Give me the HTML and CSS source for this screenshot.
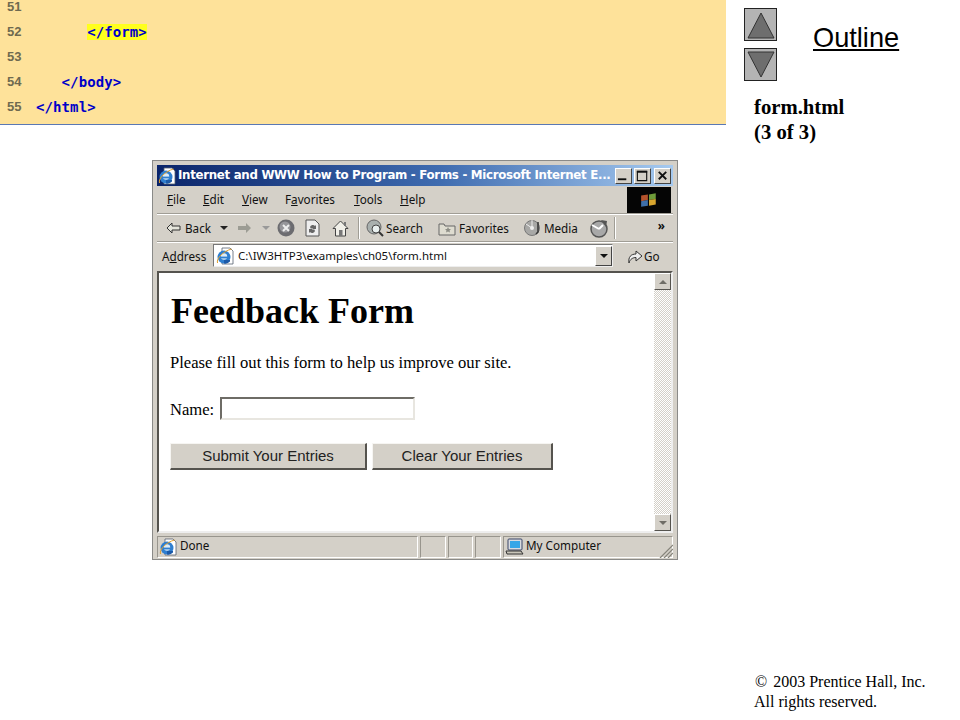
FILE: index.html
```html
<!DOCTYPE html>
<html lang="en">
<head>
<meta charset="utf-8">
<title>form.html</title>
<link rel="stylesheet" href="styles.css">
</head>
<body>
<svg class="defs" width="0" height="0" aria-hidden="true">
  <symbol id="ie" viewBox="0 0 18 18">
    <path d="M6 1h8l3 3v13H6z" fill="#fff" stroke="#55606e" stroke-width=".8"/>
    <circle cx="8" cy="10" r="6.500" fill="#2f7fd0"/>
    <circle cx="8" cy="9.500" r="3.200" fill="#dcecf8"/>
    <rect x="2" y="9.600" width="12" height="1.800" fill="#2f7fd0"/>
    <path d="M8 13h6v1.600a6.500 6.500 0 0 1-6 1.900z" fill="#1c5aa8"/>
    <path d="M1.500 16C0 11 8 4 15.500 2" fill="none" stroke="#e0a030" stroke-width="1"/>
  </symbol>
</svg>
<div class="slide">
  <main class="left">
    <section class="code">
      <div class="line"><span class="num">51</span></div>
      <div class="line"><span class="num">52</span><code class="src"><span class="spc">      </span><mark class="hl">&lt;/form&gt;</mark></code></div>
      <div class="line"><span class="num">53</span></div>
      <div class="line"><span class="num">54</span><code class="src"><span class="spc">   </span>&lt;/body&gt;</code></div>
      <div class="line"><span class="num">55</span><code class="src">&lt;/html&gt;</code></div>
    </section>

    <section class="window">
      <div class="title">
        <svg class="ico16" viewBox="0 0 18 18"><use href="#ie"/></svg>
        <span class="title-text">Internet and WWW How to Program - Forms - Microsoft Internet E...</span>
        <div class="caps">
          <span class="cap"><svg viewBox="0 0 16 15"><rect x="2" y="10" width="9" height="2" fill="#111"/></svg></span>
          <span class="cap"><svg viewBox="0 0 16 15"><path d="M2.500 2.500h10v10h-10z" fill="none" stroke="#111" stroke-width="1.200"/><rect x="2" y="2" width="11" height="2" fill="#111"/></svg></span>
          <span class="cap cap-x"><svg viewBox="0 0 16 15"><path d="M4 3l8 8M12 3l-8 8" stroke="#111" stroke-width="2"/></svg></span>
        </div>
      </div>

      <div class="menubar">
        <nav class="menus">
          <span class="m1"><u>F</u>ile</span>
          <span class="m2"><u>E</u>dit</span>
          <span class="m3"><u>V</u>iew</span>
          <span class="m4">F<u>a</u>vorites</span>
          <span class="m5"><u>T</u>ools</span>
          <span class="m6"><u>H</u>elp</span>
        </nav>
        <div class="flag">
          <svg viewBox="0 0 16 14" width="18" height="16"><path d="M1 3l6-1v5l-6 1z" fill="#b5532c"/><path d="M8 2l6-1v5l-6 1z" fill="#6e9b3a"/><path d="M1 8l6-1v5l-6 1z" fill="#3f6fa8"/><path d="M8 7l6-1v5l-6 1z" fill="#d8a52e"/></svg>
        </div>
      </div>

      <div class="toolbar">
        <svg class="t-back" width="15" height="12" viewBox="0 0 15 12"><path d="M1 6l5-5v3h8v4H6v3z" fill="#e4e4da" stroke="#333" stroke-width="1"/></svg>
        <span class="t-label l-back">Back</span>
        <span class="drop d1"></span>
        <svg class="t-fwd" width="15" height="12" viewBox="0 0 15 12"><path d="M14 6L9 1v3H1v4h8v3z" fill="#9c9c94"/></svg>
        <span class="drop d2"></span>
        <svg class="t-stop" width="18" height="18" viewBox="0 0 18 18"><circle cx="9" cy="9" r="8.500" fill="#6c6c70"/><circle cx="8" cy="8" r="5.500" fill="#96969a"/><path d="M6 6l6 6M12 6l-6 6" stroke="#eee" stroke-width="2"/></svg>
        <svg class="t-ref" width="15" height="18" viewBox="0 0 15 18"><path d="M1 1h9l4 4v12H1z" fill="#eee" stroke="#555"/><path d="M5 8a3 3 0 0 1 5-1l1-1v4H7l1-1a2 2 0 0 0-2 1zM10 12a3 3 0 0 1-5 1l-1 1v-4h4l-1 1a2 2 0 0 0 2-1z" fill="#666"/></svg>
        <svg class="t-home" width="17" height="17" viewBox="0 0 17 17"><path d="M8.500 1L1 8.500h2.500V16h10V8.500H16z" fill="#f0efe8" stroke="#444"/><rect x="7" y="10" width="3.500" height="6" fill="#777"/><rect x="12" y="2" width="2" height="4" fill="#777"/></svg>
        <span class="sep s1"></span>
        <svg class="t-search" width="18" height="18" viewBox="0 0 18 18"><circle cx="8" cy="8" r="7" fill="#a9b0ae" stroke="#666"/><circle cx="10" cy="10" r="4" fill="#e8efee" stroke="#444"/><path d="M13 13l4 4" stroke="#333" stroke-width="2"/></svg>
        <span class="t-label l-search">Search</span>
        <svg class="t-fav" width="18" height="15" viewBox="0 0 18 15"><path d="M1 3h5l1 2h10v9H1z" fill="#dedcd0" stroke="#666"/><path d="M10 6l1 2h2l-1.500 1.500.5 2-2-1-2 1 .5-2L7 8h2z" fill="#8d8d85"/></svg>
        <span class="t-label l-fav">Favorites</span>
        <svg class="t-media" width="18" height="18" viewBox="0 0 18 18"><circle cx="8" cy="9" r="7.500" fill="#a8a8a6" stroke="#777"/><circle cx="8" cy="9" r="2" fill="#eee"/><path d="M8 1v8M2 5l6 4" stroke="#eee"/><path d="M14 3v10l-2 2" fill="none" stroke="#333" stroke-width="1.500"/></svg>
        <span class="t-label l-media">Media</span>
        <svg class="t-hist" width="20" height="20" viewBox="0 0 20 20"><circle cx="10" cy="11" r="8" fill="#a8a8a8" stroke="#555" stroke-width="1.500"/><path d="M10 11L3 7M10 11l4-4" stroke="#fff" stroke-width="2"/><path d="M12 2l6 1-1 6z" fill="#555"/></svg>
        <span class="sep s2"></span>
        <span class="chev">»</span>
      </div>

      <div class="addressbar">
        <span class="addr-label">A<u>d</u>dress</span>
        <div class="addr-field">
          <svg class="ico16" viewBox="0 0 18 18"><use href="#ie"/></svg>
          <span class="addr-text">C:\IW3HTP3\examples\ch05\form.html</span>
          <span class="addr-drop"><i class="tri-down"></i></span>
        </div>
        <svg class="t-go" width="16" height="16" viewBox="0 0 16 16"><path d="M2 15C1 9 4 6 9 6V3l6 5-6 5V9.500C6 9.500 3 11 2 15z" fill="#eee" stroke="#333"/></svg>
        <span class="go-label">Go</span>
      </div>

      <div class="viewport">
        <div class="content">
          <h1 class="page-h">Feedback Form</h1>
          <p class="page-p">Please fill out this form to help us improve our site.</p>
          <p class="name-row">Name: <span class="field"></span></p>
          <div class="btns">
            <span class="btn btn-a">Submit Your Entries</span>
            <span class="btn btn-b">Clear Your Entries</span>
          </div>
        </div>
        <div class="scroll">
          <span class="sb-btn"><i class="tri-up"></i></span>
          <span class="sb-track"></span>
          <span class="sb-btn"><i class="tri-down light"></i></span>
        </div>
      </div>

      <div class="status">
        <div class="st st-main">
          <svg class="ico16" viewBox="0 0 18 18"><use href="#ie"/></svg>
          <span class="st-text">Done</span>
        </div>
        <div class="st st-s"></div>
        <div class="st st-s st-n"></div>
        <div class="st st-s"></div>
        <div class="st st-comp">
          <svg width="20" height="18" viewBox="0 0 20 18"><rect x="3" y="1" width="14" height="11" rx="1" fill="#d8dbe0" stroke="#3a4668"/><rect x="5" y="3" width="10" height="7" fill="#35a6e8"/><path d="M1 13h15l2 3H2z" fill="#c9c6ba" stroke="#333"/></svg>
          <span class="st-text">My Computer</span>
        </div>
        <svg class="grip" width="14" height="14" viewBox="0 0 14 14"><path d="M1 14L14 1M5 14L14 5M9 14l5-5" stroke="#85837a" stroke-width="1.200"/></svg>
      </div>
    </section>
  </main>

  <aside class="right">
    <div class="outline-row">
      <div class="arrows">
        <span class="arrow"><svg width="28" height="28" viewBox="0 0 28 28"><path d="M14 2L27 27H1z" fill="#6e6e6e" stroke="#333"/></svg></span>
        <span class="arrow"><svg width="28" height="28" viewBox="0 0 28 28"><path d="M14 26L27 1H1z" fill="#6e6e6e" stroke="#333"/></svg></span>
      </div>
      <span class="outline">Outline</span>
    </div>
    <p class="file">form.html<br>(3 of 3)</p>
    <p class="copy"><span class="c-mark">©</span> 2003 Prentice Hall, Inc.<br>All rights reserved.</p>
  </aside>
</div>
</body>
</html>
```

FILE: styles.css
```css
* { box-sizing: border-box; }
html, body { margin: 0; padding: 0; }
body { background: #fff; width: 960px; height: 720px; overflow: hidden; }
.defs { position: absolute; }
.slide { display: flex; width: 960px; height: 720px; }

/* left column */
.left { width: 726px; flex: none; }
.code {
  background: #fee29a;
  height: 125px;
  border-bottom: 1px solid #5a78b4;
  overflow: hidden;
}
.line { height: 25px; display: flex; align-items: center; margin-top: 0; position: relative; top: -6px; }
.num {
  width: 36px; flex: none; padding-left: 7px;
  font: bold 13px "Liberation Sans", sans-serif;
  color: #6f6a50;
}
.src {
  font: bold 14px "DejaVu Sans Mono", monospace;
  color: #0000c8;
  white-space: pre;
  letter-spacing: .1px;
}
.hl { background: #ffff1e; color: inherit; }

/* browser window */
.window {
  margin: 35px 0 0 152px;
  width: 526px; height: 400px;
  background: #d4d0c8;
  border: 1px solid #8a8a88;
  padding: 4px 4px 2px 4px;
  display: flex; flex-direction: column;
  font: 11.700px "Noto Sans", sans-serif;
  color: #111;
}
.title {
  height: 21px; flex: none;
  background: linear-gradient(90deg, #0a246a, #3f6cb0 55%, #a6caf0);
  display: flex; align-items: center; padding: 0 2px 0 1px;
}
.ico16 { width: 18px; height: 18px; flex: none; }
.title-text {
  margin-left: 2px; flex: 1; padding-bottom: 2px;
  font: bold 11.800px "DejaVu Sans", sans-serif;
  color: #fff; white-space: nowrap; letter-spacing: -.3px;
}
.caps { display: flex; gap: 2px; }
.cap {
  width: 17px; height: 16px; background: #d4d0c8;
  border: 1px solid; border-color: #fff #444 #444 #fff;
  display: flex;
}
.cap svg { width: 100%; height: 100%; }
.cap-x { margin-left: 1px; }

.menubar {
  height: 27px; flex: none; margin-top: 1px;
  display: flex; align-items: stretch; justify-content: space-between;
  border-bottom: 1px solid #a09d95;
}
.menus { display: flex; align-items: center; padding: 0 0 2px 10px; }
.menus span { white-space: nowrap; }
.m1 { width: 36px; } .m2 { width: 39px; } .m3 { width: 43px; }
.m4 { width: 69px; } .m5 { width: 46px; } .m6 { width: 30px; }
.flag { width: 44px; background: #050505; display: flex; align-items: center; justify-content: center; margin-right: 2px; }

.toolbar {
  height: 28px; flex: none;
  display: flex; align-items: center; padding-left: 9px;
  border-top: 1px solid #fff;
  border-bottom: 1px solid #a09d95;
  white-space: nowrap;
}
.drop { width: 0; height: 0; border: 4px solid transparent; border-top-color: #222; border-bottom: 0; }
.d1 { margin-left: 9px; }
.t-fwd { margin-left: 9px; }
.d2 { border-top-color: #999; margin-left: 10px; }
.t-stop { margin-left: 7px; }
.t-ref { margin-left: 10px; }
.t-home { margin-left: 12px; }
.sep { width: 2px; height: 22px; border-left: 1px solid #a09d95; border-right: 1px solid #fff; }
.s1 { margin-left: 9px; }
.t-search { margin-left: 6px; }
.t-label { margin-left: 3px; }
.l-back { margin-left: 4px; }
.l-search { margin-left: 2px; }
.t-fav { margin-left: 15px; }
.t-media { margin-left: 15px; }
.l-media { margin-left: 2px; }
.t-hist { margin-left: 11px; }
.s2 { margin-left: 5px; }
.chev { margin-left: 42px; font-weight: bold; position: relative; top: -3px; }

.addressbar {
  height: 28px; flex: none;
  display: flex; align-items: center; padding: 0 0 2px 5px;
  border-top: 1px solid #fff;
  white-space: nowrap;
}
.addr-label { width: 51px; }
.addr-field {
  width: 400px; height: 23px; background: #fff;
  border: 1px solid; border-color: #777 #eee #eee #777;
  display: flex; align-items: center; padding-left: 2px;
}
.addr-text { margin-left: 4px; flex: 1; font-size: 11.500px; }
.addr-drop {
  width: 17px; height: 20px; background: #d4d0c8;
  border: 1px solid; border-color: #fff #444 #444 #fff;
  display: flex; align-items: center; justify-content: center;
}
.tri-down { width: 0; height: 0; border: 4px solid transparent; border-top-color: #111; border-bottom: 0; display: block; }
.tri-down.light { border-top-color: #6f6d66; }
.tri-up { width: 0; height: 0; border: 4px solid transparent; border-bottom-color: #6f6d66; border-top: 0; display: block; }
.t-go { margin-left: 14px; }
.go-label { margin-left: 1px; }

.viewport {
  height: 262px; flex: none; margin-top: 1px;
  display: flex; background: #fff;
  border: 2px solid; border-color: #55534e #eee #eee #55534e;
}
.content { flex: 1; padding: 0 0 0 11px; font-family: "Liberation Serif", serif; color: #000; }
.page-h { font-size: 36px; font-weight: bold; margin: 20px 0 0 1px; line-height: 37px; }
.page-p { font-size: 16.600px; line-height: 18px; margin: 24px 0 0; }
.name-row { font-size: 16.600px; line-height: 21px; margin: 25px 0 0; display: flex; align-items: flex-end; height: 23px; }
.field {
  margin-left: 6px; width: 195px; height: 23px;
  border: 2px solid; border-color: #6e6c66 #e8e6e0 #e8e6e0 #6e6c66; background: #fff;
}
.btns { display: flex; gap: 5px; margin-top: 23px; }
.btn {
  height: 27px; background: #d4d0c8;
  border: 1px solid; border-color: #f6f5f2 #55534e #55534e #f6f5f2;
  border-width: 1px 2px 2px 1px;
  display: flex; align-items: center; justify-content: center;
  padding-bottom: 2px;
  font: 15px "Liberation Sans", sans-serif; color: #222;
}
.btn-a { width: 197px; }
.btn-b { width: 181px; }

.scroll { width: 17px; flex: none; display: flex; flex-direction: column; }
.sb-btn {
  height: 17px; flex: none; background: #d4d0c8;
  border: 1px solid; border-color: #fff #55534e #55534e #fff;
  display: flex; align-items: center; justify-content: center;
}
.sb-track { flex: 1; background: repeating-conic-gradient(#d4d0c8 0 25%, #fff 0 50%) 0 0 / 2px 2px; }

.status {
  flex: 1; margin-top: 3px; display: flex; align-items: stretch; gap: 2px;
  white-space: nowrap;
}
.st { border: 1px solid; border-color: #98958d #fff #fff #98958d; display: flex; align-items: center; }
.st-text { padding-bottom: 4px; }
.st-main { width: 261px; padding-left: 1px; gap: 3px; }
.st-s { width: 26px; }
.st-n { width: 25px; }
.st-comp { flex: 1; padding-left: 1px; gap: 1px; }
.grip { position: relative; margin-left: -16px; align-self: flex-end; }

/* right column */
.right {
  flex: 1; display: flex; flex-direction: column;
  padding: 8px 0 8px 28px;
  color: #000;
}
.outline-row { display: flex; align-items: flex-start; }
.arrows { display: flex; flex-direction: column; gap: 7px; width: 69px; flex: none; margin-left: -10px; }
.arrow {
  width: 33px; height: 33px; background: #b4b4b4; border: 1px solid #222;
  display: flex; align-items: center; justify-content: center;
}
.outline {
  font: 27.200px/32px "Liberation Sans", sans-serif;
  text-decoration: underline; margin-top: 14px;
}
.file {
  font: bold 20.700px/25px "Liberation Serif", serif;
  margin: 14px 0 0;
}
.copy {
  font: 16px/20px "Liberation Serif", serif;
  margin: auto 0 0;
}
.c-mark { margin: 0 2px 0 1px; }
```
